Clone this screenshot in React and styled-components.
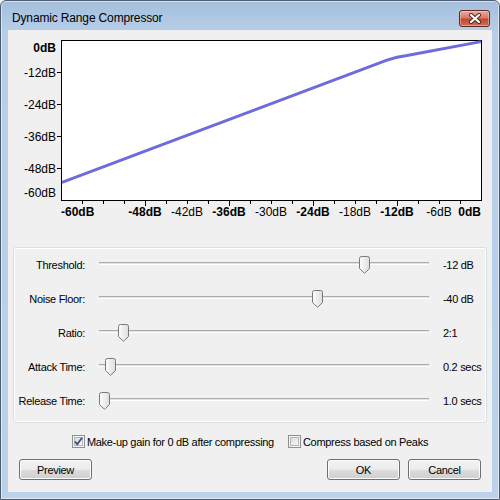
import styled, { createGlobalStyle } from 'styled-components';

const GlobalStyle = createGlobalStyle`
  html, body { margin: 0; padding: 0; background: #fff; }
  body { font-family: "Liberation Sans", Arial, sans-serif; }
`;

const Window = styled.div`
  box-sizing: border-box;
  width: 500px;
  height: 500px;
  display: flex;
  flex-direction: column;
  padding: 0 7px 7px 7px;
  border: 1px solid #4e5d70;
  border-radius: 6px 6px 0 0;
  background: linear-gradient(#a4bedb, #b7cee8 30px, #bad2ea);
  box-shadow: inset 0 0 0 1px rgba(255, 255, 255, 0.5);
`;

const TitleBar = styled.div`
  height: 29px;
  display: flex;
  align-items: flex-start;
  justify-content: space-between;
`;

const Title = styled.div`
  padding: 10px 0 0 4px;
  font-size: 12px;
  line-height: 14px;
  letter-spacing: -0.15px;
  color: #000;
`;

const CloseButton = styled.div`
  box-sizing: border-box;
  width: 31px;
  height: 17px;
  margin: 9px 2px 0 0;
  display: flex;
  align-items: center;
  justify-content: center;
  border: 1px solid #5b2b26;
  border-radius: 3px;
  background: linear-gradient(#e9a99c, #d87a67 45%, #c2452f 55%, #cf6f56);
  box-shadow: inset 0 0 0 1px rgba(255, 220, 210, 0.45);
`;

const Client = styled.div`
  flex: 1;
  display: flex;
  flex-direction: column;
  background: #f0f0f0;
`;

const Chart = styled.svg`
  display: block;
  width: 484px;
  height: 200px;
`;

const GroupBox = styled.div`
  margin: 17px 5px 0 5px;
  padding: 0 0 4px 0;
  border: 1px solid #d5dfe5;
  border-radius: 3px;
  box-shadow: inset 0 0 0 1px #fff;
`;

const SliderRow = styled.div`
  display: grid;
  grid-template-columns: 71px 330px 1fr;
  column-gap: 14px;
  align-items: center;
  height: 34px;
  font-size: 11px;
  letter-spacing: -0.3px;
  color: #000;
`;

const RowLabel = styled.div`
  text-align: right;
`;

const Slider = styled.div`
  position: relative;
  height: 34px;
`;

const Track = styled.div`
  margin-top: 14px;
  height: 1px;
  border-top: 1px solid #acacac;
  border-bottom: 1px solid #fff;
  background: #e2e2e2;
`;

const Thumb = styled.svg`
  position: absolute;
  top: 8px;
  width: 11px;
  height: 18px;
`;

const CheckRow = styled.div`
  display: flex;
  justify-content: center;
  gap: 14px;
  margin-top: 12px;
  height: 13px;
  font-size: 11px;
  letter-spacing: -0.3px;
`;

const CheckItem = styled.label`
  display: flex;
  align-items: center;
  gap: 2px;
  white-space: nowrap;
`;

const ButtonRow = styled.div`
  display: flex;
  justify-content: space-between;
  margin-top: 11px;
  padding: 0 11px;
`;

const ButtonGroup = styled.div`
  display: flex;
  gap: 8px;
`;

const Button = styled.div`
  box-sizing: border-box;
  width: 73px;
  height: 21px;
  display: flex;
  align-items: center;
  justify-content: center;
  border: 1px solid #707070;
  border-radius: 3px;
  background: linear-gradient(#f2f2f2 0%, #ebebeb 50%, #dddddd 50%, #cfcfcf 100%);
  box-shadow: inset 0 0 0 1px #fcfcfc;
  font-size: 11px;
  letter-spacing: -0.3px;
  color: #000;
`;

const sliders = [
  { label: 'Threshold:', value: '-12 dB', pos: 0.818 },
  { label: 'Noise Floor:', value: '-40 dB', pos: 0.67 },
  { label: 'Ratio:', value: '2:1', pos: 0.06 },
  { label: 'Attack Time:', value: '0.2 secs', pos: 0.019 },
  { label: 'Release Time:', value: '1.0 secs', pos: 0 },
];

const yLabels = [
  { t: '0dB', y: 52, bold: true },
  { t: '-12dB', y: 77 },
  { t: '-24dB', y: 109 },
  { t: '-36dB', y: 141 },
  { t: '-48dB', y: 173 },
  { t: '-60dB', y: 197 },
];

const xLabels = [
  { t: '-60dB', x: 61, anchor: 'start', bold: true },
  { t: '-48dB', x: 145, bold: true },
  { t: '-42dB', x: 187 },
  { t: '-36dB', x: 229, bold: true },
  { t: '-30dB', x: 271 },
  { t: '-24dB', x: 313, bold: true },
  { t: '-18dB', x: 355 },
  { t: '-12dB', x: 397, bold: true },
  { t: '-6dB', x: 439 },
  { t: '0dB', x: 481, anchor: 'end', bold: true },
];

function CompressorChart() {
  const xTicks = Array.from({ length: 19 }, (_, i) => i + 1);
  return (
    <Chart viewBox="8 30 484 200">
      <rect x="61.5" y="40.5" width="420" height="160" fill="#fff" stroke="#000" />
      {[72, 104, 136, 168].map((y) => (
        <line key={y} x1="57" x2="61" y1={y + 0.5} y2={y + 0.5} stroke="#000" />
      ))}
      {xTicks.map((i) => (
        <line
          key={i}
          x1={61.5 + i * 21}
          x2={61.5 + i * 21}
          y1="201"
          y2={i % 4 === 0 ? 206 : 204}
          stroke="#000"
        />
      ))}
      <g fontFamily="Liberation Sans, Arial, sans-serif" fontSize="12" fill="#000">
        {yLabels.map((l) => (
          <text key={l.t} x="56" y={l.y} textAnchor="end" fontWeight={l.bold ? 700 : 400}>
            {l.t}
          </text>
        ))}
        {xLabels.map((l) => (
          <text
            key={l.t}
            x={l.x}
            y="216"
            textAnchor={l.anchor || 'middle'}
            fontWeight={l.bold ? 700 : 400}
          >
            {l.t}
          </text>
        ))}
      </g>
      <path
        d="M62 182.3 L387 60.2 Q397 56.6 407 55.4 L481 41.6"
        fill="none"
        stroke="#6c6cdc"
        strokeWidth="3"
      />
    </Chart>
  );
}

function SliderThumb({ pos }) {
  return (
    <Thumb viewBox="0 0 11 18" style={{ left: pos * 318 }}>
      <defs>
        <linearGradient id="thumbFill" x1="0" y1="0" x2="1" y2="0">
          <stop offset="0" stopColor="#fdfdfd" />
          <stop offset="1" stopColor="#dedede" />
        </linearGradient>
      </defs>
      <path
        d="M0.5 2.5 Q0.5 0.5 2.5 0.5 H8.5 Q10.5 0.5 10.5 2.5 V12.5 L5.5 17.3 L0.5 12.5 Z"
        fill="url(#thumbFill)"
        stroke="#787878"
      />
    </Thumb>
  );
}

function CheckBox({ checked }) {
  return (
    <svg width="13" height="13" viewBox="0 0 13 13">
      <defs>
        <linearGradient id="cbFill" x1="0" y1="0" x2="1" y2="1">
          <stop offset="0" stopColor="#d8d8d8" />
          <stop offset="1" stopColor="#fafafa" />
        </linearGradient>
      </defs>
      <rect x="0.5" y="0.5" width="12" height="12" fill="#f4f4f4" stroke="#8e8f8f" />
      <rect x="2.5" y="2.5" width="8" height="8" fill="url(#cbFill)" stroke="#b5b5b5" />
      {checked && (
        <path d="M3 6.5 L5.3 9.2 L10 2.8" fill="none" stroke="#3c4f86" strokeWidth="1.8" />
      )}
    </svg>
  );
}

export default function App() {
  return (
    <>
      <GlobalStyle />
      <Window>
        <TitleBar>
          <Title>Dynamic Range Compressor</Title>
          <CloseButton>
            <svg width="14" height="11" viewBox="0 0 14 11">
              <path d="M3 2 L11 9 M11 2 L3 9" stroke="#4a2420" strokeWidth="4" strokeLinecap="round" />
              <path d="M3 2 L11 9 M11 2 L3 9" stroke="#fff" strokeWidth="2.2" strokeLinecap="round" />
            </svg>
          </CloseButton>
        </TitleBar>
        <Client>
          <CompressorChart />
          <GroupBox>
            {sliders.map((s) => (
              <SliderRow key={s.label}>
                <RowLabel>{s.label}</RowLabel>
                <Slider>
                  <Track />
                  <SliderThumb pos={s.pos} />
                </Slider>
                <div>{s.value}</div>
              </SliderRow>
            ))}
          </GroupBox>
          <CheckRow>
            <CheckItem>
              <CheckBox checked />
              Make-up gain for 0 dB after compressing
            </CheckItem>
            <CheckItem>
              <CheckBox />
              Compress based on Peaks
            </CheckItem>
          </CheckRow>
          <ButtonRow>
            <Button>Preview</Button>
            <ButtonGroup>
              <Button>OK</Button>
              <Button>Cancel</Button>
            </ButtonGroup>
          </ButtonRow>
        </Client>
      </Window>
    </>
  );
}
